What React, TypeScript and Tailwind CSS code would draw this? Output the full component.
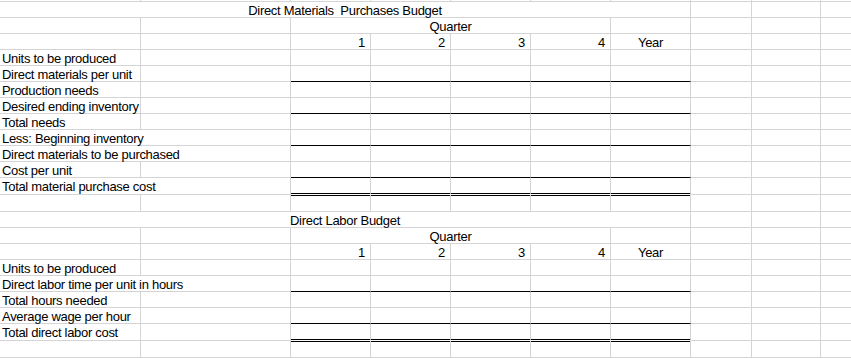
import React from "react";

type Bottom = "g" | "k" | "d";
type Align = "l" | "r" | "c";

function Cell({
  w,
  bottom = "g",
  right = true,
  align = "l",
  children,
}: {
  w: string;
  bottom?: Bottom;
  right?: boolean;
  align?: Align;
  children?: React.ReactNode;
}) {
  const b =
    bottom === "g"
      ? "h-full border-b border-b-[#d4d4d4]"
      : bottom === "k"
      ? "h-full border-b border-b-black"
      : "h-[18px] border-b-[3px] border-double border-b-black";
  const r = right ? "border-r border-r-[#d4d4d4]" : "";
  const a =
    align === "r" ? "text-right pr-[5px]" : align === "c" ? "text-center" : "text-left pl-[2px]";
  return (
    <div className={`${w} shrink-0 whitespace-pre leading-[15px] pt-[1px] ${b} ${r} ${a}`}>
      {children}
    </div>
  );
}

function Tail() {
  return (
    <>
      <Cell w="w-[61px]" />
      <Cell w="w-[69px]" />
      <div className="h-full flex-1 border-b border-b-[#d4d4d4]" />
    </>
  );
}

function Row({ h = "h-[16px]", children }: { h?: string; children?: React.ReactNode }) {
  return <div className={`flex ${h} items-start`}>{children}</div>;
}

function DataRow({
  label,
  bottom = "g",
  overflow = false,
  h,
}: {
  label?: string;
  bottom?: Bottom;
  overflow?: boolean;
  h?: string;
}) {
  return (
    <Row h={h}>
      <Cell w="w-[141px]" right={!overflow}>
        {label}
      </Cell>
      <Cell w="w-[150px]" />
      <Cell w="w-[80px]" bottom={bottom} />
      <Cell w="w-[80px]" bottom={bottom} />
      <Cell w="w-[80px]" bottom={bottom} />
      <Cell w="w-[80px]" bottom={bottom} />
      <Cell w="w-[80px]" bottom={bottom} />
      <Tail />
    </Row>
  );
}

function TitleRow({ title }: { title: string }) {
  return (
    <Row>
      <Cell w="w-[691px]" align="c">
        {title}
      </Cell>
      <Tail />
    </Row>
  );
}

function QuarterRow() {
  return (
    <Row>
      <Cell w="w-[141px]" />
      <Cell w="w-[150px]" />
      <Cell w="w-[320px]" align="c">
        Quarter
      </Cell>
      <Cell w="w-[80px]" />
      <Tail />
    </Row>
  );
}

function NumberRow() {
  return (
    <Row>
      <Cell w="w-[141px]" />
      <Cell w="w-[150px]" />
      <Cell w="w-[80px]" align="r">
        1
      </Cell>
      <Cell w="w-[80px]" align="r">
        2
      </Cell>
      <Cell w="w-[80px]" align="r">
        3
      </Cell>
      <Cell w="w-[80px]" align="r">
        4
      </Cell>
      <Cell w="w-[80px]" align="c">
        Year
      </Cell>
      <Tail />
    </Row>
  );
}

export default function App() {
  return (
    <div
      className="w-[851px] h-[358px] overflow-hidden bg-white text-black text-[13px] tracking-[-0.3px]"
      style={{ fontFamily: '"Liberation Sans", Arial, sans-serif' }}
    >
      <DataRow h="h-[2px]" />
      <TitleRow title="Direct Materials  Purchases Budget" />
      <QuarterRow />
      <NumberRow />
      <DataRow label="Units to be produced" />
      <DataRow label="Direct materials per unit" bottom="k" />
      <DataRow label="Production needs" />
      <DataRow label="Desired ending inventory" bottom="k" />
      <DataRow label="Total needs" />
      <DataRow label="Less: Beginning inventory" bottom="k" overflow />
      <DataRow label="Direct materials to be purchased" overflow />
      <DataRow label="Cost per unit" bottom="k" />
      <DataRow label="Total material purchase cost" bottom="d" overflow h="h-[17px]" />
      <DataRow h="h-[17px]" />
      <TitleRow title="Direct Labor Budget" />
      <QuarterRow />
      <NumberRow />
      <DataRow label="Units to be produced" />
      <DataRow label="Direct labor time per unit in hours" bottom="k" overflow />
      <DataRow label="Total hours needed" />
      <DataRow label="Average wage per hour" bottom="k" />
      <DataRow label="Total direct labor cost" bottom="d" h="h-[17px]" />
      <DataRow h="h-[17px]" />
      <DataRow />
    </div>
  );
}
